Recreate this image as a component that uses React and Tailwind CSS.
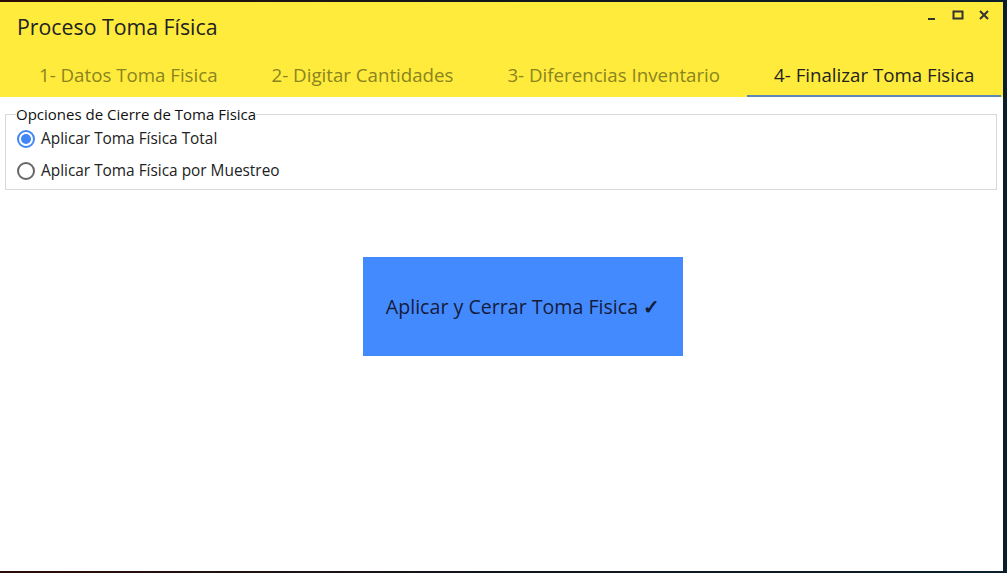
import { useState } from "react";

const tabs = [
  "1- Datos Toma Fisica",
  "2- Digitar Cantidades",
  "3- Diferencias Inventario",
  "4- Finalizar Toma Fisica",
];

export default function App() {
  const [tab, setTab] = useState(3);
  const [opcion, setOpcion] = useState("total");

  return (
    <div className="w-[1007px] h-[573px] bg-gradient-to-r from-[#2b0b06] via-[#10161c] to-[#0a1e2c] pt-[2px] overflow-hidden font-['Open_Sans',sans-serif]">
      <div className="w-[1003px] h-[569px] bg-white flex flex-col">
        {/* encabezado amarillo */}
        <div className="bg-[#ffeb3b] h-[95px] flex flex-col">
          <div className="flex items-start justify-between">
            <h1 className="ml-[17px] mt-[11px] text-[21.3px] leading-[28px] text-[#222]">Proceso Toma Física</h1>
            <div className="flex items-center gap-[14px] mr-[13px] mt-[7px] text-[#333]">
              <svg width="12" height="12" viewBox="0 0 12 12"><rect x="2" y="9" width="7" height="2" fill="currentColor" /></svg>
              <svg width="12" height="12" viewBox="0 0 12 12"><rect x="1.5" y="2.5" width="9" height="7" fill="none" stroke="currentColor" strokeWidth="2" /></svg>
              <svg width="12" height="12" viewBox="0 0 12 12"><path d="M2 2L10 10M10 2L2 10" stroke="currentColor" strokeWidth="2" /></svg>
            </div>
          </div>
          <div className="flex mt-auto ml-[12px]">
            {tabs.map((t, i) => (
              <button
                key={t}
                onClick={() => setTab(i)}
                className={
                  "px-[27px] h-[38px] text-[18.7px] leading-[24px] pb-[4px] border-b-2 whitespace-nowrap " +
                  (tab === i ? "text-[#222] border-[#5b86b6]" : "text-[#8a8420] border-transparent")
                }
              >
                {t}
              </button>
            ))}
          </div>
        </div>

        {/* opciones de cierre */}
        <fieldset className="mx-[5px] mt-[8px] h-[85px] w-[992px] border border-[#d8d8d8] px-[11px] pb-[4px]">
          <legend className="text-[15px] leading-[18px] text-[#111] px-0 -ml-[1px]">Opciones de Cierre de Toma Fisica</legend>
          <label className="flex items-center gap-[6px] h-[24px] mt-[4px] cursor-pointer" onClick={() => setOpcion("total")}>
            <Radio on={opcion === "total"} />
            <span className="text-[15.4px] text-[#222]">Aplicar Toma Física Total</span>
          </label>
          <label className="flex items-center gap-[6px] h-[24px] mt-[8px] cursor-pointer" onClick={() => setOpcion("muestreo")}>
            <Radio on={opcion === "muestreo"} />
            <span className="text-[15.4px] text-[#222]">Aplicar Toma Física por Muestreo</span>
          </label>
        </fieldset>

        <div className="flex justify-center mt-[67px]">
          <button className="w-[320px] h-[99px] bg-[#448aff] text-[#141c3a] text-[19.6px] ml-[43px]">
            Aplicar y Cerrar Toma Fisica <span className="font-bold">✓</span>
          </button>
        </div>
      </div>
    </div>
  );
}

function Radio({ on }) {
  return (
    <span
      className={
        "w-[18px] h-[18px] rounded-full border-2 flex items-center justify-center " +
        (on ? "border-[#4285f4]" : "border-[#666]")
      }
    >
      {on && <span className="w-[10px] h-[10px] rounded-full bg-[#4285f4]" />}
    </span>
  );
}
